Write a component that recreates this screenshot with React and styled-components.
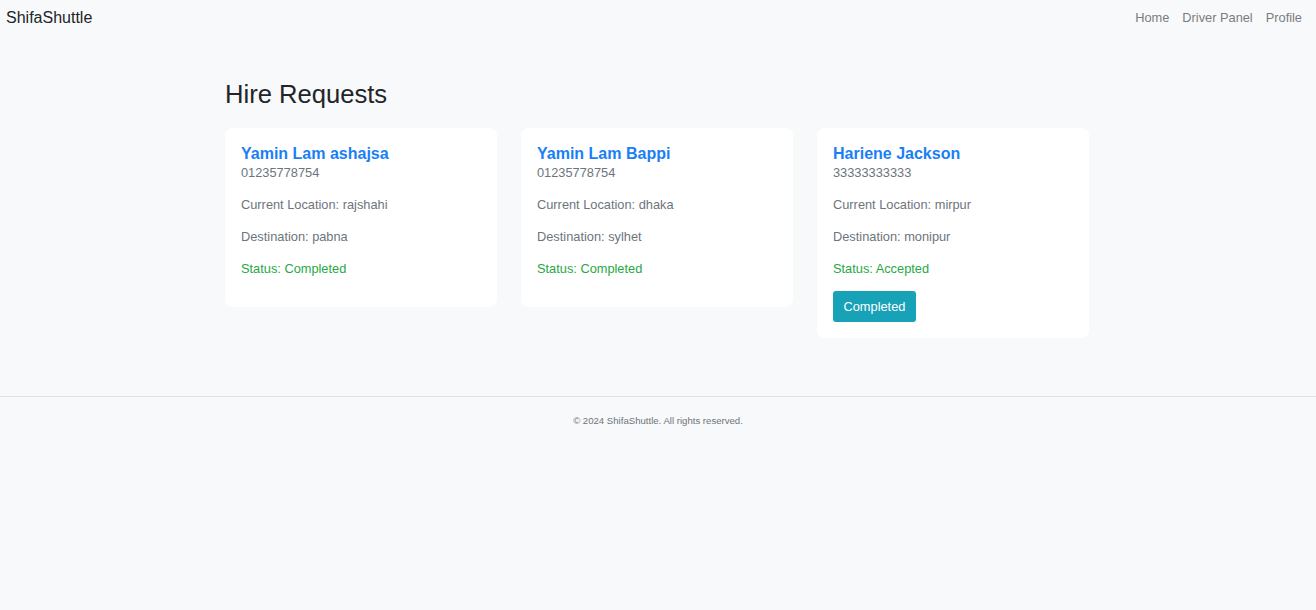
import React from "react";
import styled, { createGlobalStyle } from "styled-components";

const Global = createGlobalStyle`
  html, body { margin: 0; padding: 0; background: #f8f9fa; }
  body { font-family: "Liberation Sans", Arial, sans-serif; color: #212529; }
  * { box-sizing: border-box; }
`;

const Page = styled.div`
  min-height: 610px;
  display: flex;
  flex-direction: column;
`;

const Navbar = styled.nav`
  height: 35px;
  display: flex;
  align-items: center;
  justify-content: space-between;
  padding: 0 14px 0 6px;
`;

const Brand = styled.a`
  font-size: 16px;
  color: #212529;
  text-decoration: none;
`;

const NavLinks = styled.div`
  display: flex;
  gap: 13px;
`;

const NavLink = styled.a`
  font-size: 12.8px;
  color: #7a7d80;
  text-decoration: none;
`;

const Main = styled.main`
  width: 888px;
  margin: 0 auto;
  padding: 44px 12px 58px 11px;
`;

const Title = styled.h2`
  margin: 0 0 19px;
  font-size: 25.6px;
  line-height: 30px;
  font-weight: 400;
  color: #212529;
`;

const Grid = styled.div`
  display: grid;
  grid-template-columns: repeat(3, 272px);
  gap: 24px;
  align-items: start;
`;

const Card = styled.div`
  background: #fff;
  border-radius: 8px;
  padding: 17px 16px 16px;
`;

const Name = styled.h5`
  margin: 0;
  font-size: 16px;
  line-height: 18px;
  font-weight: 700;
  color: #1a7ff5;
`;

const Line = styled.p`
  margin: 0 0 13px;
  font-size: 12.8px;
  line-height: 19px;
  color: ${(p) => (p.$status ? "#28a745" : "#6c757d")};
`;

const Button = styled.button`
  display: block;
  font-family: inherit;
  font-size: 12.8px;
  line-height: 19px;
  padding: 6px 10.5px;
  color: #fff;
  background: #17a2b8;
  border: none;
  border-radius: 3px;
  cursor: pointer;
`;

const Footer = styled.footer`
  border-top: 1px solid #dee2e6;
  padding: 17px 0;
  text-align: center;
  font-size: 9.6px;
  line-height: 14px;
  color: #6c757d;
`;

const requests = [
  { name: "Yamin Lam ashajsa", phone: "01235778754", from: "rajshahi", to: "pabna", status: "Completed" },
  { name: "Yamin Lam Bappi", phone: "01235778754", from: "dhaka", to: "sylhet", status: "Completed" },
  { name: "Hariene Jackson", phone: "33333333333", from: "mirpur", to: "monipur", status: "Accepted" },
];

export default function App() {
  return (
    <Page>
      <Global />
      <Navbar>
        <Brand href="#">ShifaShuttle</Brand>
        <NavLinks>
          <NavLink href="#">Home</NavLink>
          <NavLink href="#">Driver Panel</NavLink>
          <NavLink href="#">Profile</NavLink>
        </NavLinks>
      </Navbar>
      <Main>
        <Title>Hire Requests</Title>
        <Grid>
          {requests.map((r) => (
            <Card key={r.name}>
              <Name>{r.name}</Name>
              <Line>{r.phone}</Line>
              <Line>Current Location: {r.from}</Line>
              <Line>Destination: {r.to}</Line>
              <Line $status>Status: {r.status}</Line>
              {r.status === "Accepted" && <Button>Completed</Button>}
            </Card>
          ))}
        </Grid>
      </Main>
      <Footer>© 2024 ShifaShuttle. All rights reserved.</Footer>
    </Page>
  );
}
